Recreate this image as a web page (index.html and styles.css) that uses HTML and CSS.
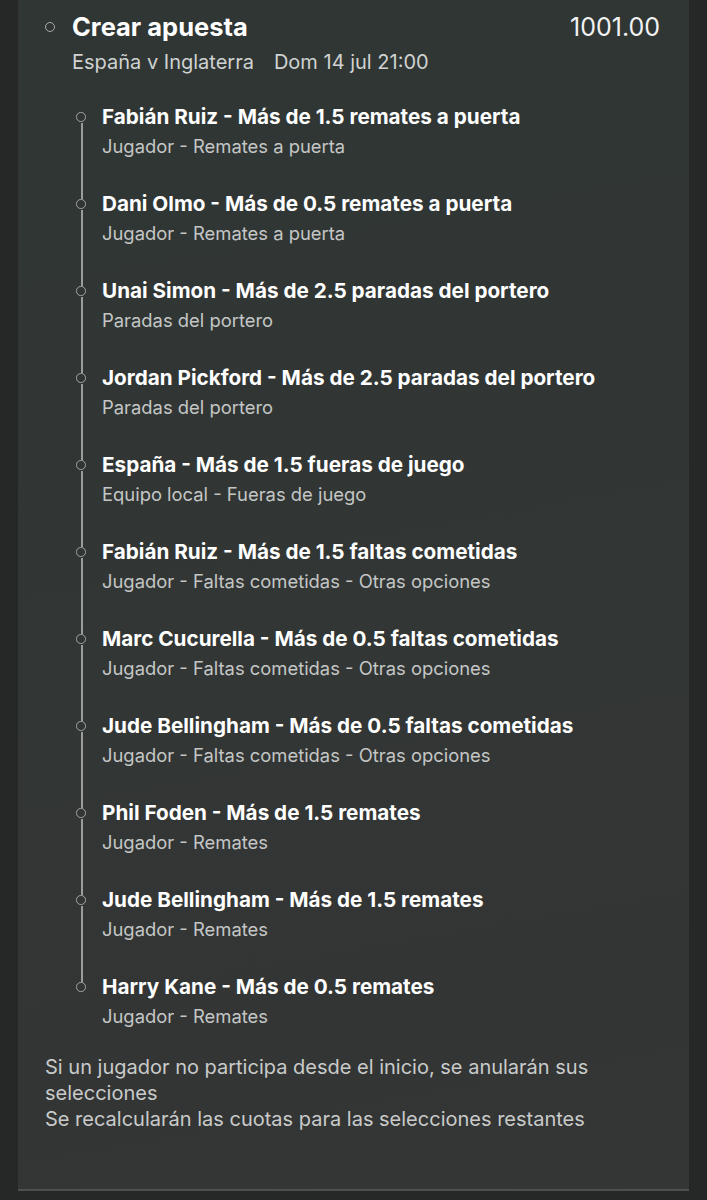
FILE: index.html
```html
<!DOCTYPE html>
<html lang="es">
<head>
    <meta charset="UTF-8">
    <meta name="viewport" content="width=device-width, initial-scale=1.0">
    <title>Crear apuesta</title>
    <link rel="stylesheet" href="styles.css">
</head>
<body>
    <div class="sheet">
        <div class="header">
            <span class="dot"></span>
            <div class="header-text">
                <div class="title-row">
                    <h1>Crear apuesta</h1>
                    <span class="odds">1001.00</span>
                </div>
                <div class="event">España v Inglaterra<span class="kickoff">Dom 14 jul 21:00</span></div>
            </div>
        </div>

        <ul class="legs">
            <li class="leg">
                <div class="leg-title">Fabián Ruiz - Más de 1.5 remates a puerta</div>
                <div class="leg-market">Jugador - Remates a puerta</div>
            </li>
            <li class="leg">
                <div class="leg-title">Dani Olmo - Más de 0.5 remates a puerta</div>
                <div class="leg-market">Jugador - Remates a puerta</div>
            </li>
            <li class="leg">
                <div class="leg-title">Unai Simon - Más de 2.5 paradas del portero</div>
                <div class="leg-market">Paradas del portero</div>
            </li>
            <li class="leg">
                <div class="leg-title">Jordan Pickford - Más de 2.5 paradas del portero</div>
                <div class="leg-market">Paradas del portero</div>
            </li>
            <li class="leg">
                <div class="leg-title">España - Más de 1.5 fueras de juego</div>
                <div class="leg-market">Equipo local - Fueras de juego</div>
            </li>
            <li class="leg">
                <div class="leg-title">Fabián Ruiz - Más de 1.5 faltas cometidas</div>
                <div class="leg-market">Jugador - Faltas cometidas - Otras opciones</div>
            </li>
            <li class="leg">
                <div class="leg-title">Marc Cucurella - Más de 0.5 faltas cometidas</div>
                <div class="leg-market">Jugador - Faltas cometidas - Otras opciones</div>
            </li>
            <li class="leg">
                <div class="leg-title">Jude Bellingham - Más de 0.5 faltas cometidas</div>
                <div class="leg-market">Jugador - Faltas cometidas - Otras opciones</div>
            </li>
            <li class="leg">
                <div class="leg-title">Phil Foden - Más de 1.5 remates</div>
                <div class="leg-market">Jugador - Remates</div>
            </li>
            <li class="leg">
                <div class="leg-title">Jude Bellingham - Más de 1.5 remates</div>
                <div class="leg-market">Jugador - Remates</div>
            </li>
            <li class="leg">
                <div class="leg-title">Harry Kane - Más de 0.5 remates</div>
                <div class="leg-market">Jugador - Remates</div>
            </li>
        </ul>

        <div class="notes">
            <p>Si un jugador no participa desde el inicio, se anularán sus selecciones</p>
            <p>Se recalcularán las cuotas para las selecciones restantes</p>
        </div>
    </div>
</body>
</html>
```

FILE: styles.css
```css
body {
    margin: 0;
    background-color: #262727;
    font-family: Inter, "Noto Sans", sans-serif;
    color: #fff;
}
.sheet {
    margin: 0 18px;
    padding: 12px 29px 57px 27px;
    background: linear-gradient(170deg, #2f3634 0%, #323635 55%, #343535 100%);
    border-bottom: 2px solid #4c514f;
}
.header {
    display: flex;
    align-items: flex-start;
    gap: 17px;
}
.dot {
    flex: none;
    width: 8px;
    height: 8px;
    margin-top: 10px;
    border: 1.5px solid #a8abaa;
    border-radius: 50%;
}
.header-text {
    flex: 1;
}
.title-row {
    display: flex;
    justify-content: space-between;
    align-items: baseline;
}
h1 {
    margin: 0;
    font-size: 25.5px;
    line-height: 30px;
    font-weight: 700;
}
.odds {
    font-size: 25px;
    font-weight: 400;
    color: #f2f2f2;
}
.event {
    margin-top: 7px;
    font-size: 20px;
    line-height: 26px;
    color: #d0d2d1;
}
.kickoff {
    margin-left: 20px;
}
.legs {
    list-style: none;
    margin: 29px 0 0 31px;
    padding: 0;
}
.leg {
    position: relative;
    padding: 0 0 32px 26px;
}
.leg:last-child {
    padding-bottom: 25px;
}
/* timeline marker + connector down to the next leg */
.leg::before {
    content: "";
    position: absolute;
    left: 0;
    top: 8px;
    width: 7.5px;
    height: 7.5px;
    border: 1.75px solid #a3a6a5;
    border-radius: 50%;
}
.leg::after {
    content: "";
    position: absolute;
    left: 5px;
    top: 19px;
    width: 1.5px;
    height: 76px;
    background-color: #9a9d9c;
}
.leg:last-child::after {
    display: none;
}
.leg-title {
    font-size: 20.7px;
    line-height: 26px;
    font-weight: 700;
    color: #fff;
}
.leg-market {
    margin-top: 3px;
    font-size: 18.4px;
    line-height: 26px;
    color: #c4c6c5;
}
.notes p {
    margin: 0;
    font-size: 20px;
    line-height: 26px;
    color: #c9cbca;
}
```
